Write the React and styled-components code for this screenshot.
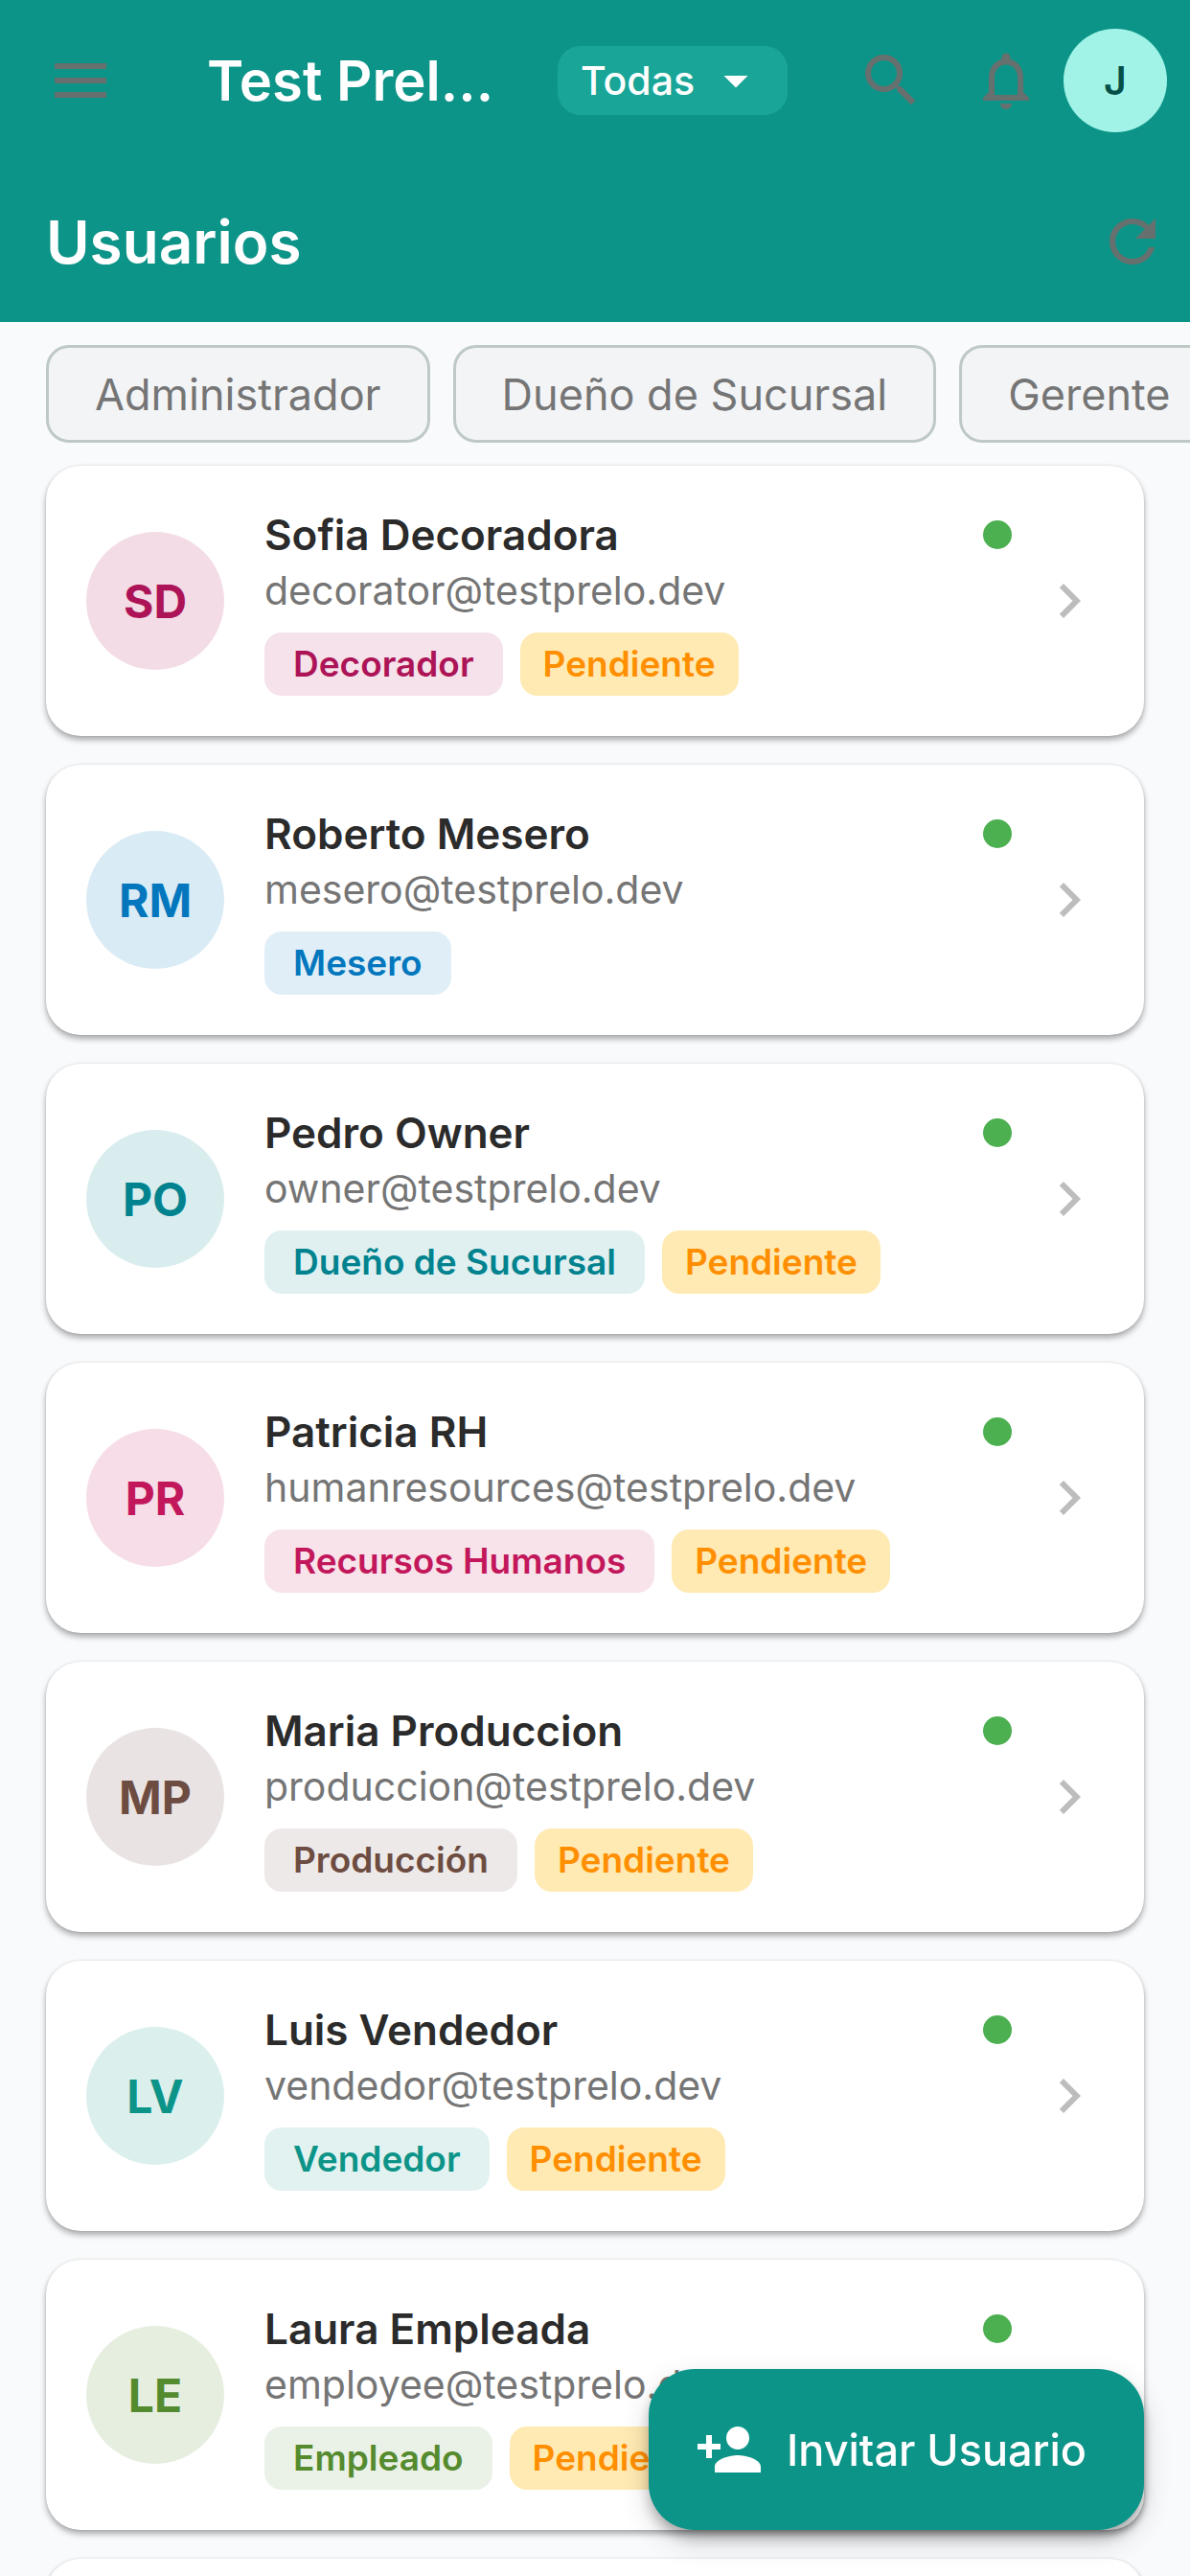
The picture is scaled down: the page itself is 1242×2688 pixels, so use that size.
import styled, { createGlobalStyle } from "styled-components";
import {
  MdArrowDropDown,
  MdChevronRight,
  MdMenu,
  MdNotificationsNone,
  MdPersonAdd,
  MdRefresh,
  MdSearch,
} from "react-icons/md";

const GlobalStyle = createGlobalStyle`
  * {
    box-sizing: border-box;
  }
  body {
    margin: 0;
    background: #f9fafc;
    font-family: Inter, "Open Sans", sans-serif;
  }
  button, select {
    font-family: inherit;
  }
`;

const Page = styled.div`
  height: 100vh;
  display: flex;
  flex-direction: column;
  overflow: hidden;
`;

const Header = styled.header`
  flex: none;
  background: #0d9488;
  color: #ffffff;
`;

const Bar = styled.div`
  display: flex;
  align-items: center;
  height: 168px;
  padding: 0 24px 0 48px;
`;

const IconButton = styled.button`
  display: flex;
  flex: none;
  padding: 0;
  border: none;
  background: none;
  color: #66706e;
  font-size: 72px;
  cursor: pointer;
`;

const BrandTitle = styled.h1`
  flex: 1;
  min-width: 0;
  margin: 0 0 0 96px;
  font-size: 58px;
  font-weight: 600;
  white-space: nowrap;
`;

const SectionTitle = styled.h2`
  flex: 1;
  margin: 0;
  font-size: 62px;
  font-weight: 600;
`;

const BranchPicker = styled.div`
  position: relative;
  margin-right: 72px;

  svg {
    position: absolute;
    top: 6px;
    right: 24px;
    font-size: 60px;
    pointer-events: none;
  }
`;

const BranchSelect = styled.select`
  appearance: none;
  display: block;
  height: 72px;
  padding: 0 96px 0 24px;
  border: none;
  border-radius: 24px;
  background: #19a698;
  color: #ffffff;
  font-size: 41px;
  font-weight: 500;
`;

const Actions = styled.div`
  display: flex;
  align-items: center;
  gap: 48px;
`;

const Profile = styled.button`
  flex: none;
  width: 108px;
  height: 108px;
  margin-left: 24px;
  padding: 0;
  border: none;
  border-radius: 50%;
  background: #a1f3e7;
  color: #045048;
  font-size: 41px;
  font-weight: 600;
`;

const Filters = styled.nav`
  display: flex;
  flex: none;
  gap: 24px;
  padding: 24px 48px;
  overflow: hidden;
`;

const FilterChip = styled.button`
  flex: none;
  height: 102px;
  padding: 0 48px;
  border: 3px solid #bec9c6;
  border-radius: 24px;
  background: #f3f4f6;
  color: #757575;
  font-size: 45px;
  font-weight: 400;
`;

const List = styled.main`
  display: flex;
  flex: 1;
  flex-direction: column;
  gap: 30px;
  min-height: 0;
  padding: 0 48px;
`;

const Card = styled.article`
  display: flex;
  flex: none;
  align-items: center;
  min-height: 282px;
  padding: 42px;
  border-radius: 36px;
  background: #ffffff;
  box-shadow: 0 4px 6px rgba(0, 0, 0, 0.32), 0 0 3px rgba(0, 0, 0, 0.1);
`;

const Avatar = styled.div`
  display: flex;
  flex: none;
  align-items: center;
  justify-content: center;
  width: 144px;
  height: 144px;
  margin-right: 42px;
  border-radius: 50%;
  background: ${({ $color }) => $color}26;
  color: ${({ $color }) => $color};
  font-size: 48px;
  font-weight: 700;
`;

const Info = styled.div`
  flex: 1;
  min-width: 0;
`;

const NameRow = styled.div`
  display: flex;
  align-items: center;
  justify-content: space-between;
`;

const Name = styled.h3`
  margin: 0;
  color: #2b2b2b;
  font-size: 44px;
  font-weight: 600;
  line-height: 60px;
`;

const StatusDot = styled.span`
  width: 30px;
  height: 30px;
  border-radius: 50%;
  background: #4caf50;
`;

const Email = styled.p`
  margin: 0 0 16px;
  color: #757575;
  font-size: 41px;
  line-height: 56px;
`;

const Tags = styled.div`
  display: flex;
  gap: 18px;
`;

const Tag = styled.span`
  padding: 0 30px;
  border-radius: 18px;
  background: ${({ $color }) => $color}1f;
  color: ${({ $color }) => $color};
  font-size: 37px;
  font-weight: 600;
  line-height: 66px;
`;

const PendingTag = styled(Tag)`
  padding: 0 24px;
  background: #ffeab3;
  color: #ff8f00;
`;

const OpenButton = styled(IconButton)`
  margin-left: 24px;
  color: #bdbdbd;
`;

const InviteButton = styled.button`
  position: fixed;
  right: 48px;
  bottom: 48px;
  display: flex;
  align-items: center;
  gap: 24px;
  height: 168px;
  padding: 0 60px 0 48px;
  border: none;
  border-radius: 48px;
  background: #0d9488;
  color: #ffffff;
  font-size: 45px;
  font-weight: 500;
  box-shadow: 0 9px 15px -3px rgba(0, 0, 0, 0.32), 0 12px 30px rgba(0, 0, 0, 0.16);

  svg {
    font-size: 72px;
  }
`;

const filters = ["Administrador", "Dueño de Sucursal", "Gerente"];

const users = [
  { initials: "SD", name: "Sofia Decoradora", email: "decorator@testprelo.dev", role: "Decorador", color: "#ad1457", pending: true },
  { initials: "RM", name: "Roberto Mesero", email: "mesero@testprelo.dev", role: "Mesero", color: "#0277bd", pending: false },
  { initials: "PO", name: "Pedro Owner", email: "owner@testprelo.dev", role: "Dueño de Sucursal", color: "#00838f", pending: true },
  { initials: "PR", name: "Patricia RH", email: "humanresources@testprelo.dev", role: "Recursos Humanos", color: "#c2185b", pending: true },
  { initials: "MP", name: "Maria Produccion", email: "produccion@testprelo.dev", role: "Producción", color: "#6d4c41", pending: true },
  { initials: "LV", name: "Luis Vendedor", email: "vendedor@testprelo.dev", role: "Vendedor", color: "#0d9488", pending: true },
  { initials: "LE", name: "Laura Empleada", email: "employee@testprelo.dev", role: "Empleado", color: "#558b2f", pending: true },
];

const UserCard = ({ user }) => (
  <Card>
    <Avatar $color={user.color}>{user.initials}</Avatar>
    <Info>
      <NameRow>
        <Name>{user.name}</Name>
        <StatusDot />
      </NameRow>
      <Email>{user.email}</Email>
      <Tags>
        <Tag $color={user.color}>{user.role}</Tag>
        {user.pending && <PendingTag>Pendiente</PendingTag>}
      </Tags>
    </Info>
    <OpenButton aria-label={user.name}>
      <MdChevronRight />
    </OpenButton>
  </Card>
);

const App = () => {
  return (
    <Page>
      <GlobalStyle />
      <Header>
        <Bar>
          <IconButton aria-label="Menú">
            <MdMenu />
          </IconButton>
          <BrandTitle>Test Prel…</BrandTitle>
          <BranchPicker>
            <BranchSelect aria-label="Sucursal" defaultValue="Todas">
              <option>Todas</option>
            </BranchSelect>
            <MdArrowDropDown />
          </BranchPicker>
          <Actions>
            <IconButton aria-label="Buscar">
              <MdSearch />
            </IconButton>
            <IconButton aria-label="Notificaciones">
              <MdNotificationsNone />
            </IconButton>
          </Actions>
          <Profile>J</Profile>
        </Bar>
        <Bar>
          <SectionTitle>Usuarios</SectionTitle>
          <IconButton aria-label="Actualizar">
            <MdRefresh />
          </IconButton>
        </Bar>
      </Header>

      <Filters>
        {filters.map((filter) => (
          <FilterChip key={filter}>{filter}</FilterChip>
        ))}
      </Filters>

      <List>
        {users.map((user) => (
          <UserCard key={user.email} user={user} />
        ))}
        <Card aria-hidden="true" />
      </List>

      <InviteButton>
        <MdPersonAdd />
        Invitar Usuario
      </InviteButton>
    </Page>
  );
};

export default App;
